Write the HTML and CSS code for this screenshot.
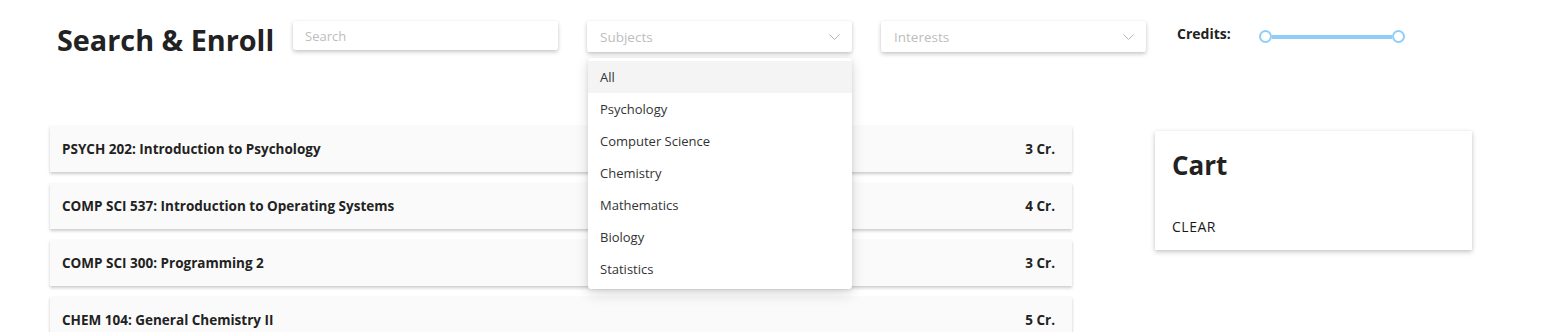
FILE: index.html
```html
<!DOCTYPE html>
<html>
<head>
<meta charset="utf-8">
<link rel="stylesheet" href="styles.css">
</head>
<body>
<header class="topbar">
  <h1 class="title">Search &amp; Enroll</h1>
  <div class="field search"><span class="placeholder">Search</span></div>
  <div class="select-wrap">
    <div class="field select"><span class="placeholder">Subjects</span>
      <svg class="chev" width="11" height="7" viewBox="0 0 11 7"><path d="M0.5 0.5 L5.5 5.5 L10.5 0.5" fill="none" stroke="#b5b5b5" stroke-width="1"/></svg>
    </div>
    <ul class="menu">
      <li class="active">All</li>
      <li>Psychology</li>
      <li>Computer Science</li>
      <li>Chemistry</li>
      <li>Mathematics</li>
      <li>Biology</li>
      <li>Statistics</li>
    </ul>
  </div>
  <div class="field select interests"><span class="placeholder">Interests</span>
    <svg class="chev" width="11" height="7" viewBox="0 0 11 7"><path d="M0.5 0.5 L5.5 5.5 L10.5 0.5" fill="none" stroke="#b5b5b5" stroke-width="1"/></svg>
  </div>
  <div class="credits">
    <span class="credits-label">Credits:</span>
    <div class="slider"><span class="thumb"></span><span class="track"></span><span class="thumb"></span></div>
  </div>
</header>
<main class="content">
  <section class="courses">
    <div class="course"><span>PSYCH 202: Introduction to Psychology</span><span>3 Cr.</span></div>
    <div class="course"><span>COMP SCI 537: Introduction to Operating Systems</span><span>4 Cr.</span></div>
    <div class="course"><span>COMP SCI 300: Programming 2</span><span>3 Cr.</span></div>
    <div class="course"><span>CHEM 104: General Chemistry II</span><span>5 Cr.</span></div>
  </section>
  <aside class="cart">
    <h2 class="cart-title">Cart</h2>
    <div class="clear">CLEAR</div>
  </aside>
</main>
</body>
</html>
```
FILE: styles.css
```css
* { box-sizing: border-box; }
html, body { margin: 0; padding: 0; background: #fff; }
body {
  font-family: "Open Sans", "Noto Sans", sans-serif;
  color: #222;
  width: 1545px;
  height: 332px;
  overflow: hidden;
}
.topbar {
  display: flex;
  align-items: flex-start;
  padding: 21px 0 0 57px;
  height: 125px;
}
.title {
  margin: 0;
  font-size: 28.8px;
  font-weight: 700;
  line-height: 38px;
  color: #222;
  width: 236px;
  white-space: nowrap;
}
.field {
  height: 30px;
  width: 265px;
  background: #fff;
  border-radius: 2px;
  box-shadow: 0 2px 4px rgba(0,0,0,0.22), 0 0 2px rgba(0,0,0,0.06);
  display: flex;
  align-items: center;
  padding: 0 12px;
  font-size: 13px;
}
.placeholder { color: #bdbdbd; }
.search { margin-top: 0; height: 29px; }
.select-wrap { position: relative; margin-left: 29px; }
.select { justify-content: space-between; height: 31px; padding-left: 13px; }
.select .placeholder { font-size: 13.5px; }
.interests { margin-left: 29px; }
.chev { margin-right: 0; margin-top: 1px; }
.menu {
  position: absolute;
  left: 1px;
  top: 37px;
  width: 264px;
  margin: 0;
  padding: 3px 0 4px;
  list-style: none;
  background: #fff;
  border-radius: 3px;
  box-shadow: 0 5px 14px rgba(0,0,0,0.14), 0 1px 4px rgba(0,0,0,0.1);
  z-index: 5;
}
.menu li {
  height: 32px;
  line-height: 32px;
  padding-left: 12px;
  font-size: 13px;
  color: #333;
}
.menu li.active { background: #f4f4f4; }
.credits {
  margin-left: 31px;
  display: flex;
  align-items: center;
  height: 30px;
}
.credits-label {
  font-size: 14px;
  font-weight: 700;
  color: #222;
  width: 82px;
  margin-top: -5px;
}
.slider {
  display: flex;
  align-items: center;
  margin-top: 1px;
}
.thumb {
  width: 13px;
  height: 13px;
  border-radius: 50%;
  border: 2px solid #90cdf7;
  background: #fff;
  flex: none;
}
.track {
  width: 120px;
  height: 4px;
  background: #90cdf7;
}
.content {
  display: flex;
  align-items: flex-start;
  padding-left: 50px;
  margin-top: 1px;
}
.courses {
  width: 1022px;
  display: flex;
  flex-direction: column;
  gap: 11px;
}
.course {
  height: 46px;
  background: #fafafa;
  box-shadow: 0 2px 3px rgba(0,0,0,0.2), 0 0 1px rgba(0,0,0,0.05);
  display: flex;
  justify-content: space-between;
  align-items: center;
  padding: 0 17px 0 12px;
  font-size: 13.5px;
  font-weight: 700;
  color: #222;
}
.cart {
  margin-left: 83px;
  margin-top: 5px;
  width: 317px;
  height: 119px;
  background: #fff;
  box-shadow: 0 2px 5px rgba(0,0,0,0.22), 0 0 2px rgba(0,0,0,0.06);
  padding: 17px 17px 0;
}
.cart-title {
  margin: 0;
  font-size: 26px;
  font-weight: 700;
  line-height: 34px;
  color: #222;
}
.clear {
  margin-top: 35px;
  font-size: 14px;
  font-weight: 500;
  letter-spacing: 0.5px;
  color: #1a1a1a;
}
```
